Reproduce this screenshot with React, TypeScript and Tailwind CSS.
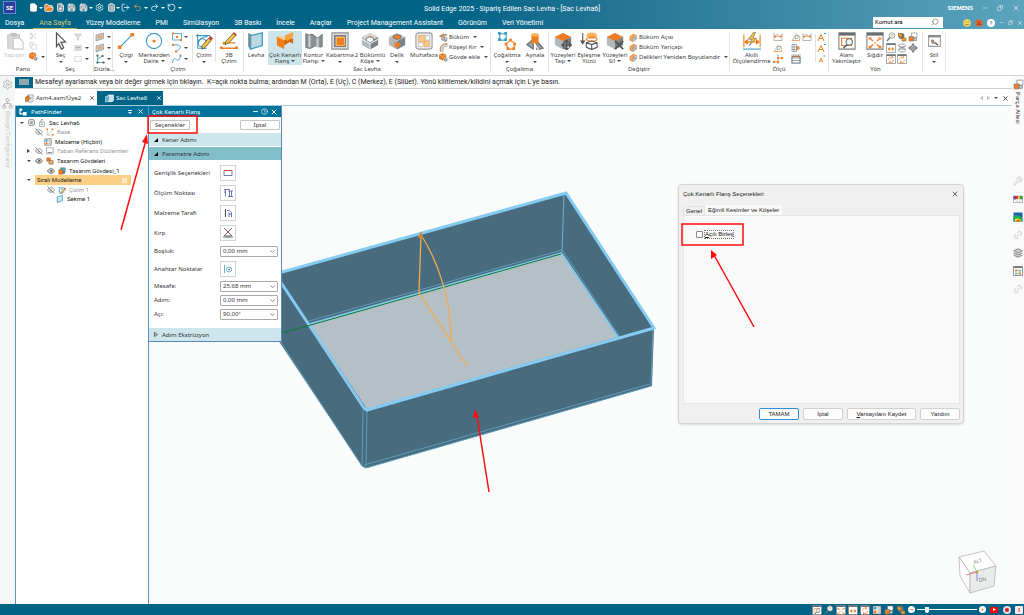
import type { ReactNode } from "react";
import {
  Eye,
  EyeOff,
  File,
  FilePlus,
  FolderOpen,
  Link2,
  Layers,
  Minus,
  Redo2,
  RotateCcw,
  Save,
  Scissors,
  Search,
  Settings,
  Undo2,
  Wrench,
  X,
  Copy,
  Filter,
  ClipboardList,
  LogOut,
  CircleHelp,
  Network,
} from "lucide-react";

const menuTabs = [
  "Dosya",
  "Ana Sayfa",
  "Yüzey Modelleme",
  "PMI",
  "Simülasyon",
  "3B Baskı",
  "İncele",
  "Araçlar",
  "Project Management Assistant",
  "Görünüm",
  "Veri Yönetimi",
];

const treeRows = [
  { label: "Sac Levha6", indent: "pl-1", caret: "open", icon: "root", eye: "", dim: false },
  { label: "Base", indent: "pl-[11px]", caret: "", icon: "axes", eye: "off", dim: true },
  { label: "Malzeme (Hiçbiri)", indent: "pl-[20px]", caret: "", icon: "material", eye: "", dim: false },
  { label: "Taban Referans Düzlemleri", indent: "pl-[11px]", caret: "closed", icon: "plane", eye: "off", dim: true },
  { label: "Tasarım Gövdeleri", indent: "pl-[11px]", caret: "open", icon: "bodies", eye: "on", dim: false },
  { label: "Tasarım Gövdesi_1", indent: "pl-[23px]", caret: "", icon: "body", eye: "on", dim: false },
  { label: "Sıralı Modelleme", indent: "pl-[11px]", caret: "open", icon: "", eye: "", dim: false },
  { label: "Çizim 1", indent: "pl-[23px]", caret: "", icon: "sketch", eye: "off", dim: true },
  { label: "Sekme 1", indent: "pl-[32px]", caret: "", icon: "tab", eye: "", dim: false },
];

const ORANGE = "#ef7d22";
const GRAY = "#6b7276";
const BLUE = "#3a9bc4";

function Icon({ name, className = "size-5" }: { name: string; className?: string }) {
  return (
    <svg className={`${className} shrink-0`} viewBox="0 0 20 20" fill="none" stroke={GRAY} strokeWidth="1.2">
      {drawings[name]}
    </svg>
  );
}

const isoBox = (top: string) => (
  <>
    <path d="M10 1l9 4.500v9L10 19.500l-9-5v-9z" fill="#b4b8ba" stroke="none" />
    <path d="M10 10l9-4.500v9l-9 5z" fill="#7d8487" stroke="none" />
    <path d="M10 1l9 4.500-9 4.500-9-4.500z" fill={top} stroke="none" />
  </>
);

const drawings: Record<string, ReactNode> = {
  paste: (
    <>
      <path d="M2 3h13v15H2z" fill="#d9dadb" stroke="#c6c8c9" />
      <path d="M5 1h7v4H5z" fill="#bfc1c2" stroke="none" />
      <path d="M8 7h7l4 4v8H8z" fill="#fff" stroke="#c6c8c9" />
    </>
  ),
  cursor: <path d="M5 1l10 10-5 .5 3 6-2.500 1.500-3-6L5 16z" fill="#fff" stroke="#555" strokeWidth="1.400" />,
  line: (
    <>
      <path d="M3 17L17 3" stroke={BLUE} />
      <path d="M1 15h4v4H1zM15 1h4v4h-4z" fill={ORANGE} stroke="none" />
    </>
  ),
  circle: (
    <>
      <circle cx="10" cy="10" r="8.500" stroke={BLUE} />
      <circle cx="10" cy="10" r="1.800" fill={ORANGE} stroke="none" />
    </>
  ),
  sketch: (
    <>
      <path d="M3 2v16h10M1 4h16M3 15C3 9 8 5 14 5" stroke={BLUE} />
      <circle cx="8" cy="12" r="4.500" stroke={BLUE} />
      <path d="M8 15l7-8 3 2.500-7 8-3.500 1.500z" fill="#f6c13d" stroke="#444" strokeWidth=".8" />
      <path d="M15 7l2-2.500 3 2.500-2 2.500z" fill="#c03c30" stroke="none" />
    </>
  ),
  sketch3d: (
    <>
      <path d="M1 18h18M4 12h13" stroke={ORANGE} strokeWidth="1.500" />
      <path d="M0 16h3v3H0zM17 16h3v3h-3zM3 11h3v3H3z" fill={ORANGE} stroke="none" />
      <path d="M6 11l9-10 3 2.500-8.500 9L6 14z" fill="#f6c13d" stroke="#444" strokeWidth=".8" />
      <path d="M15 1l3 2.500" stroke="#c03c30" strokeWidth="2" />
    </>
  ),
  plate: (
    <>
      <path d="M4 3l-2-1v14l2 3z" fill="#8b9296" stroke="#7a8285" />
      <path d="M4 4l13-3v14L4 19z" fill="#bcd9e1" stroke={BLUE} strokeWidth="1.400" />
    </>
  ),
  flange: (
    <>
      <path d="M1 5l8 4v10l-8-4z" fill="#f07f1a" stroke="none" />
      <path d="M1 5l3-1 8 4-3 1.500z" fill="#ffc98a" stroke="none" />
      <path d="M9 9l3-1 7-1v6l-4-2-6 4z" fill="#d9660a" stroke="none" />
      <path d="M10 4l9-4v5l-6 5-3-2z" fill="#f9a13a" stroke="none" />
    </>
  ),
  contour: (
    <>
      <path d="M1 2c5 4 5-2 9 2s6 2 9-1v13c-4 3-5-3-9 0s-5 2-9 1z" fill="#8a9296" stroke="#6e7679" />
      <path d="M5 4v13M14 6v11" stroke="#c6cbcd" strokeWidth="2.500" />
    </>
  ),
  emboss: (
    <>
      <path d="M1 1h18v18H1z" fill="#dedfe0" stroke="#8a9093" />
      <path d="M4 4h12v12H4z" fill="#9ba0a3" stroke="#777" />
      <path d="M6 6h9v9H6z" fill={ORANGE} stroke="#ffb45c" />
    </>
  ),
  corner: (
    <>
      {isoBox("#d6d9da")}
      <path d="M6 7l4-2 4 2v3l-4 2-4-2z" fill="#fff" stroke="#888" />
      <path d="M9 5l1-1 2 1-1 1.500z" fill={ORANGE} stroke="none" />
      <path d="M1 8l9 5 9-5M10 13v6.500" stroke="#eee" />
    </>
  ),
  hole: (
    <>
      {isoBox("#d0d3d4")}
      <ellipse cx="10" cy="5.500" rx="4.500" ry="2.500" fill={ORANGE} stroke="#777" />
      <path d="M7 11l3 1.500 3-1.500v5l-3 1.500L7 16z" fill={ORANGE} stroke="none" />
    </>
  ),
  housing: (
    <>
      <rect x="1" y="1" width="18" height="18" rx="3" fill="#e9eaeb" stroke="#989da0" />
      <path d="M4 4h7v7H4zM10 10h6v6h-6z" fill="#f9c88a" stroke="#f3a65c" strokeWidth=".8" />
      <path d="M12 4h4v5h-4zM4 12h5v4H4z" fill="#fff" stroke="#b8bbbc" strokeWidth=".8" />
    </>
  ),
  pattern: (
    <>
      <path d="M2 2h7v7H2z" stroke={BLUE} strokeWidth="1.200" />
      <path d="M0 0h3v3H0zM7 0h3v3H7zM0 7h3v3H0zM7 7h3v3H7z" fill={BLUE} stroke="none" />
      <path d="M14 9l5 4-2 6h-6l-2-6z" stroke={ORANGE} strokeWidth="1.200" />
      <path d="M12.500 7.500h3v3h-3zM7.500 12h3v3h-3zM9.500 17h3v3h-3zM16 17h3v3h-3zM17 12h3v3h-3z" fill={ORANGE} stroke="none" />
    </>
  ),
  mirror: (
    <>
      <path d="M1 14l7-6v11zM19 18l-7-8v10z" fill="#9ba1a4" stroke="#5f6669" />
      <path d="M6 3v8c0 3 8 3 8 0V3z" fill={ORANGE} stroke="none" />
      <ellipse cx="10" cy="3" rx="4" ry="2" fill="#ffb35a" stroke="none" />
      <path d="M9 12l5 8" stroke="#fff" />
    </>
  ),
  moveface: (
    <>
      {isoBox(ORANGE)}
      <path d="M14 9v11M9 14.500h10M14 9l-2 2h4zM14 20l-2-2h4zM8.500 14.500l2-2v4zM19.500 14.500l-2-2v4z" fill="#555" stroke="#555" />
    </>
  ),
  matchface: (
    <>
      <ellipse cx="13" cy="4" rx="6" ry="3.500" fill="#ffb162" stroke="none" />
      <ellipse cx="13" cy="8" rx="6" ry="2" stroke={ORANGE} />
      <path d="M7 12l6-2 6 2v5l-6 2.500L7 17zM7 12l6 2 6-2M13 14v5" fill="#fff" stroke="#555" />
      <path d="M3 1v10M1 10l2 3 2-3z" fill="#555" stroke="#555" />
    </>
  ),
  deleteface: (
    <>
      {isoBox(ORANGE)}
      <path d="M10 10l9 9M19 10l-9 9" stroke="#555" strokeWidth="2" />
    </>
  ),
  smartdim: (
    <>
      <path d="M1 3v14M19 3v14" stroke={ORANGE} />
      <path d="M2 11h16M2 11l3-2v4zM18 11l-3-2v4z" fill={ORANGE} stroke={ORANGE} />
      <path d="M12 0L6 8h4l-3 7 8-8h-4l3-7z" fill="#f6c32c" stroke="#777" strokeWidth=".8" />
      <path d="M0 19h20" stroke={BLUE} />
    </>
  ),
  zoomarea: (
    <>
      <path d="M1 1h18v18H1z" fill="#fff" stroke="#7b8083" />
      <path d="M1 1h18v3H1z" fill="#696e71" stroke="none" />
      <path d="M4 7h11v8H4z" stroke={ORANGE} />
      <circle cx="12.500" cy="11" r="3.500" fill="#eef4f6" />
      <path d="M10 14l-4 4" strokeWidth="2" />
    </>
  ),
  fit: (
    <>
      <path d="M1 1h18v18H1z" fill="#fff" stroke="#7b8083" />
      <path d="M1 1h18v3H1z" fill="#696e71" stroke="none" />
      <path d="M4 7l4 3M16 7l-4 3M4 17l4-3M16 17l-4-3" stroke={ORANGE} strokeWidth="1.500" />
      <path d="M3 6h4l-4 3zM17 6h-4l4 3zM3 18h4l-4-3zM17 18h-4l4-3z" fill={ORANGE} stroke="none" />
      <circle cx="10" cy="12" r="1" fill={ORANGE} stroke="none" />
    </>
  ),
  style: (
    <>
      <path d="M4 4h13v12H4z" fill="#fff" stroke="#9aa0a2" />
      <path d="M3.500 3.500h14v2.500h-14z" fill="#888" stroke="none" />
      <path d="M7 9h2.500l1 3.500H8z" fill="#e69a5d" stroke="#666" strokeWidth=".8" />
      <path d="M11 12l3.500 2.500" stroke="#444" />
    </>
  ),
  frame: (
    <>
      <path d="M1 1h18v18H1z" fill="#fff" stroke="#6f7477" />
      <path d="M1 1h18v3H1z" fill="#6f7477" stroke="none" />
      <path d="M4 12h12M4 12l3-3v6zM16 12l-3-3v6z" stroke={ORANGE} fill={ORANGE} />
    </>
  ),
  orbit: (
    <>
      <path d="M1 1h18v18H1z" fill="#fff" stroke="#6f7477" />
      <path d="M1 1h18v3H1z" fill="#6f7477" stroke="none" />
      <path d="M5 11a5 5 0 018-4M15 12a5 5 0 01-8 4M12 4l2 3-3 2M8 19l-2-3 3-2" stroke={ORANGE} strokeWidth="1.500" />
    </>
  ),
  rect: (
    <>
      <path d="M1 3h18v13H1z" stroke={BLUE} strokeWidth="1.600" />
      <path d="M8 8h4v4H8zM0 1h4v4H0zM16 14h4v4h-4z" fill={ORANGE} stroke="none" />
    </>
  ),
  arc: (
    <>
      <path d="M3 4c14-3 20 6 5 13" stroke={BLUE} strokeWidth="1.800" />
      <path d="M0 2h4v4H0zM6 15h4v4H6z" fill={ORANGE} stroke="none" />
    </>
  ),
  spline: (
    <>
      <path d="M1 18C2 8 6 8 9 11s6 2 8-8" stroke={BLUE} strokeWidth="1.800" />
      <path d="M15 1h4v4h-4z" fill="#8b989d" stroke="none" />
    </>
  ),
  planeA: (
    <>
      <path d="M2 6l15-4v11L2 18z" fill="#c6cacc" stroke="#80878a" />
      <path d="M6 8l8-2v5l-8 2z" fill="#f6a45a" stroke="none" />
    </>
  ),
  coord: (
    <>
      <path d="M5 2v15h14M5 11l10-7" stroke={BLUE} strokeWidth="1.600" />
      <path d="M3 1h4v4H3zM13 2h4v4h-4zM3 15h4v4H3zM15 15h4v4h-4z" fill="#5c6468" stroke="none" />
    </>
  ),
  steps: (
    <>
      <path d="M2 16h8V8h9" stroke={ORANGE} strokeWidth="1.600" />
      <path d="M0 14h4v4H0zM8 6h4v4H8zM16 6h4v4h-4zM8 14h4v4H8z" fill={ORANGE} stroke="none" />
      <path d="M10 1v5M10 18v2" stroke={BLUE} strokeWidth="1.600" />
    </>
  ),
  bend: (
    <>
      <path d="M1 7l8-5 9 2-6 4v6l6 3-4 2-8-4V9z" fill="#b3b8ba" stroke="#696f72" />
      <path d="M2 7l7-4 4 1-7 5z" fill={ORANGE} stroke="none" />
      <circle cx="15" cy="13" r="3" fill="#ddd" />
    </>
  ),
  breakcorner: (
    <>
      <path d="M3 19V11C4 5 9 2 18 1v6c-6 0-8 3-9 12z" fill="#d5d8d9" stroke="#8f9497" />
      <path d="M3 19V11C4 5 9 2 18 1" stroke={ORANGE} strokeWidth="1.800" />
    </>
  ),
  bendangle: (
    <>
      <path d="M2 8l8-6 5 3-7 5v9l-6-3z" fill="#f3a45c" stroke={ORANGE} />
      <path d="M9 10l8-5v8l-8 6z" fill="#eceeef" stroke="#777" />
      <circle cx="13" cy="12" r="2" stroke="#555" />
    </>
  ),
  addbody: (
    <>
      <path d="M8 1l7 3v8l-7 4-7-4V4z" fill={ORANGE} stroke="#b95606" />
      <path d="M1 4l7 4 7-4" stroke="#ffcf9d" />
      <circle cx="15" cy="15" r="4.500" fill="#777" stroke="#fff" />
      <path d="M13 15h4M15 13v4" stroke="#fff" />
    </>
  ),
  dimension: (
    <>
      <path d="M2 2v15h16V2M5 9l4-5 4 5" stroke="#888" />
      <path d="M2 9h16M2 9l3-2v4zM18 9l-3-2v4z" fill={ORANGE} stroke={ORANGE} />
    </>
  ),
  angle: (
    <>
      <path d="M2 17L11 3M2 17h16M14 5c3 3 4 7 3 11" stroke={ORANGE} strokeWidth="1.300" />
      <path d="M9 7h6l-2 6H8z" stroke={BLUE} />
    </>
  ),
  calendar: (
    <>
      <path d="M0 0h20v20H0z" fill="#c8dfea" stroke="none" />
      <path d="M2 5h16v13H2z" fill="#fff" stroke="#596166" strokeWidth="1.600" />
      <path d="M2 8h16M2 13h16" stroke="#596166" />
      <path d="M5 2v5M10 2v5M15 2v5" stroke={ORANGE} strokeWidth="2" />
    </>
  ),
  table: (
    <>
      <path d="M2 3h9v14H2zM2 8h9M2 13h9M6 3v14M14 8l4 2-4 3" />
      <path d="M12 6h3v8h-3z" fill={ORANGE} stroke="none" />
    </>
  ),
  textA: (
    <>
      <path d="M4 18L10 5l6 13M6 13h8" stroke={ORANGE} strokeWidth="2" />
      <path d="M16 3h4" stroke={BLUE} strokeWidth="2" />
    </>
  ),
  textSmall: (
    <>
      <path d="M6 17l4-9 4 9M7 14h6" stroke={ORANGE} strokeWidth="1.600" />
      <path d="M15 4h4" stroke={BLUE} strokeWidth="2" />
    </>
  ),
  globe: (
    <>
      <circle cx="9" cy="8" r="6" fill="#777" stroke="none" />
      <path d="M3 2l7 3v6l-7-2zM10 12h8v6h-8z" fill="#f2a43c" stroke="#8f5a1a" />
    </>
  ),
  spin: (
    <>
      <ellipse cx="10" cy="5" rx="7" ry="3" />
      <path d="M3 5c0 5 14 4 14 9M17 5c0 5-14 4-14 9" />
      <ellipse cx="10" cy="15" rx="7" ry="3" />
    </>
  ),
  pan: (
    <>
      <path d="M10 0l3 4h-6zM10 20l3-4h-6zM0 10l4-3v6zM20 10l-4-3v6z" fill="#777" stroke="none" />
      <path d="M10 4l6 3v6l-6 3-6-3V7z" fill="#9ea4a6" />
    </>
  ),
  magnify: (
    <>
      <circle cx="12" cy="7" r="5.500" fill="#f4f6f7" />
      <path d="M8 11l-6 7" strokeWidth="2.500" />
      <path d="M12 4v4M12 9.500v1" stroke={ORANGE} strokeWidth="1.500" />
    </>
  ),
  blocks: (
    <>
      <path d="M7 2h11v9H7z" fill="#fff" stroke="#777" />
      <path d="M2 9h9v9H2z" fill={ORANGE} stroke="#777" />
      <path d="M12 12h5v5h-5z" fill="#d7d9da" />
    </>
  ),
  doc: (
    <>
      <path d="M6 2h12v13l-3 3H6z" fill="#eef3f5" stroke="#5d7078" />
      <path d="M1 7l8-3v10l-8 3z" fill={ORANGE} stroke="#8a4a10" />
      <path d="M9 8h6M9 11h6" />
    </>
  ),
  tabdoc: (
    <>
      <path d="M7 2h12v12l-3 3H7z" fill="#cfe3ea" stroke="#fff" />
      <path d="M1 6l9-2v11l-9 3z" fill="#5db2cf" stroke="#e9f4f8" />
    </>
  ),
  pathfinder: <path d="M1 1h7v6H4v6h6v-3h9v9h-9v-3H1z" fill="#fff" stroke="none" />,
  root: (
    <>
      <path d="M4 8h12v11H4z" fill="#fff" stroke="#555" />
      <path d="M7 8V4a3 3 0 016 0" stroke="#777" strokeWidth="1.500" />
      <path d="M8 12h4v3H8z" fill={BLUE} stroke="none" />
    </>
  ),
  part: (
    <>
      <rect x="2" y="2" width="16" height="16" rx="3" fill="#fff" stroke="#555" strokeWidth="2" />
      <path d="M6 7h8M6 13h8M6 10h8" stroke="#555" strokeWidth="1.600" />
    </>
  ),
  axes: (
    <>
      <path d="M3 2v16h15M3 18L17 3" stroke={GRAY} strokeDasharray="2 1" />
      <path d="M1 1h4v4H1zM14 1h4v4h-4zM15 15h4v4h-4z" fill={ORANGE} stroke="none" />
    </>
  ),
  material: (
    <>
      <path d="M2 2h16v16H2z" fill="#fff" stroke="#555" strokeWidth="1.500" />
      <path d="M4 4h5v5H4z" fill={BLUE} stroke="none" />
      <path d="M4 11h5v5H4z" fill={ORANGE} stroke="none" />
      <path d="M11 6h5M11 10h5M11 14h5" stroke="#555" />
    </>
  ),
  plane: (
    <>
      <path d="M1 2h17v15H1z" fill="#fff" stroke="#777" strokeWidth="1.400" />
      <path d="M4 13h11v2H4z" fill="#777" stroke="none" />
    </>
  ),
  bodies: (
    <>
      <path d="M2 2h9v8H2z" fill={ORANGE} stroke="#b15c12" />
      <path d="M8 9h10v9H8z" fill="#f8ad55" stroke="#555" />
      <path d="M3 11l5 5" stroke="#333" />
    </>
  ),
  body: (
    <>
      <path d="M6 2h12v11H6z" fill="#4fa6c4" stroke="#34788f" />
      <path d="M2 7h10v11H2z" fill={ORANGE} stroke="#a8560f" />
      <path d="M12 12h5v5h-5z" fill="#666" stroke="none" />
    </>
  ),
  tab: <path d="M3 5l13-4v13L3 19z" fill="#cfe9f1" stroke={BLUE} strokeWidth="2" />,
  eyelines: (
    <>
      <path d="M2 4h16v12H2z" fill="#ddd" stroke="#bbb" />
      <path d="M5 9h10" />
    </>
  ),
  selectbox: <path d="M2 4h16v12H2z" fill="#fff" stroke="#b5b5b5" />,
  palette: (
    <>
      <path d="M1 4h18v13H1z" fill="#fff" stroke="#888" />
      <path d="M1 4h5v7H1z" fill="#7a3fa0" stroke="none" />
      <path d="M6 4h4v7H6z" fill="#e2382d" stroke="none" />
      <path d="M10 4h4v7h-4z" fill="#f5c02d" stroke="none" />
      <path d="M14 4h5v7h-5z" fill="#2f9e59" stroke="none" />
      <path d="M5 12l4-3 4 3 4-2v6H5z" fill="#e7eef1" stroke="none" />
    </>
  ),
  rainbow: (
    <>
      <path d="M1 1h18v18H1z" fill="#1f62b5" stroke="none" />
      <path d="M1 19V9a11 11 0 0118 8v2z" fill="#22b04c" stroke="none" />
      <path d="M4 19v-5a9 9 0 0113 5z" fill="#f7d633" stroke="none" />
      <path d="M7 19v-2a5 5 0 018 2z" fill="#e44326" stroke="none" />
    </>
  ),
  swatches: (
    <>
      <path d="M1 1h18v18H1z" fill="#fff" stroke="#777" strokeWidth="1.600" />
      <path d="M1 1h18v3H1z" fill="#777" stroke="none" />
      <path d="M4 7h5v4H4zM11 13h5v4h-5z" fill={ORANGE} stroke="none" />
      <path d="M11 7h5v4h-5zM4 13h5v4H4z" fill="#76b8d0" stroke="none" />
    </>
  ),
  smile: (
    <>
      <circle cx="10" cy="10" r="9.500" fill="#f6dc62" stroke="none" />
      <path d="M5 12c2 4 8 4 10 0M7 6v3M13 6v3" stroke="#6a5a10" strokeWidth="1.800" />
    </>
  ),
  frown: (
    <>
      <circle cx="10" cy="10" r="9.500" fill="#d8683a" stroke="none" />
      <path d="M5 15c2-4 8-4 10 0M6 6l3 2M14 6l-3 2" stroke="#5d1a00" strokeWidth="1.800" />
    </>
  ),
};

function Caret({ className = "text-[#444]" }: { className?: string }) {
  return (
    <svg className={`h-[2px] w-1 shrink-0 ${className}`} viewBox="0 0 4 2" fill="currentColor">
      <path d="M0 0h4L2 2z" />
    </svg>
  );
}

type BigButtonProps = {
  icon: string;
  lines: string[];
  width: string;
  caret?: boolean;
  active?: boolean;
  disabled?: boolean;
};

function BigButton({ icon, lines, width, caret, active, disabled }: BigButtonProps) {
  return (
    <button
      disabled={disabled}
      className={`${width} ${active ? "bg-[#cde5ea]" : ""} ${
        disabled ? "text-[#c4c4c4]" : "text-[#3c3c3c]"
      } flex h-[34px] shrink-0 flex-col items-center pt-px leading-[6px] whitespace-nowrap`}
    >
      <Icon name={icon} className="mb-[2px] size-[18px]" />
      <span>{lines[0]}</span>
      {lines.length > 1 ? (
        <span className="flex items-center gap-[2px]">
          {lines[1]}
          {caret && <Caret />}
        </span>
      ) : (
        caret && <Caret className="mt-[3px] text-[#444]" />
      )}
    </button>
  );
}

function Group({ label, width, children }: { label: string; width: string; children: ReactNode }) {
  return (
    <section className={`${width} flex shrink-0 flex-col pt-[2px]`}>
      <div className="flex h-[34px]">{children}</div>
      <h2 className="text-center leading-[8px]">{label}</h2>
    </section>
  );
}

function Rule() {
  return <div className="my-[3px] w-px shrink-0 bg-[#e2e2e2]" />;
}

function SmallIcons({ names, cols, carets }: { names: string[]; cols: string; carets?: boolean }) {
  return (
    <div className={`grid ${cols} content-start gap-x-px`}>
      {names.map((name, index) =>
        name ? (
          <button key={index} className="flex h-[11px] items-center gap-[2px]">
            <Icon name={name} className="size-[10px]" />
            {carets && <Caret />}
          </button>
        ) : (
          <span key={index} />
        ),
      )}
    </div>
  );
}

function TextCommands({ items }: { items: { icon: string; label: string; caret?: boolean }[] }) {
  return (
    <div className="flex flex-col pt-px">
      {items.map((item) => (
        <button key={item.label} className="flex h-[10px] items-center gap-px whitespace-nowrap">
          <Icon name={item.icon} className="size-[9px]" />
          {item.label}
          {item.caret && (
            <span className="pl-[3px]">
              <Caret />
            </span>
          )}
        </button>
      ))}
    </div>
  );
}

function TitleBar() {
  return (
    <header className="bg-linear-to-r from-[#006487] from-45% to-[#5aa4bd] font-['Roboto',sans-serif] text-[7px] text-white">
      <div className="relative flex h-[15px] items-center">
        <div className="ml-[3px] flex size-[13px] items-center justify-center border border-[#6f86d6] bg-[#27409e] text-[6px] font-bold">
          SE
        </div>
        <div className="ml-[13px] flex items-center">
          <File className="size-[9px] fill-white" />
          <Caret className="ml-px text-white" />
          <FolderOpen className="ml-px size-[10px] fill-[#ef7d22]" />
          <FilePlus className="ml-[2px] size-[9px] fill-[#8a9ba3]" />
          <Save className="ml-[2px] size-[9px] fill-[#8a9ba3]" />
          <Save className="ml-[3px] size-[9px] fill-[#8a9ba3]" />
          <Caret className="ml-px text-white" />
          <Settings className="ml-[2px] size-[9px]" />
          <ClipboardList className="ml-[3px] size-[9px] fill-[#8a9ba3]" />
          <Caret className="text-white" />
          <LogOut className="ml-px size-[9px]" />
          <Undo2 className="ml-[3px] size-[9px] text-[#d99a55]" />
          <Caret className="ml-[2px] text-white" />
          <Redo2 className="ml-[2px] size-[9px]" />
          <Caret className="ml-[2px] text-white" />
          <RotateCcw className="ml-[2px] size-[9px]" />
          <Caret className="ml-[2px] text-white" />
        </div>
        <h1 className="absolute inset-x-0 top-[5px] text-center leading-[9px]">
          Solid Edge 2025 - Sipariş Edilen Sac Levha - [Sac Levha6]
        </h1>
        <div className="relative ml-auto flex items-center gap-[9px] pr-1">
          <span className="text-[6px] font-bold">SIEMENS</span>
          <button aria-label="Simge durumuna küçült">
            <Minus className="size-[6px]" />
          </button>
          <button aria-label="Geri yükle">
            <Copy className="size-[6px] -scale-x-100" />
          </button>
          <button aria-label="Kapat">
            <X className="size-[8px]" />
          </button>
        </div>
      </div>
      <div className="flex h-[14px] items-stretch pl-[5px]">
        <nav className="flex gap-[15px]">
          {menuTabs.map((tab) => (
            <button
              key={tab}
              className={
                tab === "Ana Sayfa"
                  ? "-mx-[6px] border-b border-[#b5b368] px-[6px] pt-[3px] text-[#dccb74]"
                  : "border-b border-transparent pt-[3px]"
              }
            >
              {tab}
            </button>
          ))}
        </nav>
        <div className="ml-auto flex items-center">
          <label className="flex h-[11px] w-[70px] items-center bg-white pr-1">
            <input
              aria-label="Komut ara"
              placeholder="Komut ara"
              className="w-full min-w-0 pl-[2px] text-[6px] text-black outline-none placeholder:text-black"
            />
            <Search className="size-2 shrink-0 -scale-x-100 text-[#777]" />
          </label>
          <div className="ml-5 flex items-center gap-1 pt-px pr-px">
            <Icon name="smile" className="size-2" />
            <Icon name="frown" className="size-2" />
            <span className="flex size-2 items-center justify-center rounded-full bg-white text-[6px] text-[#006487]">?</span>
            <Minus className="size-[5px]" />
            <Copy className="size-[5px] -scale-x-100" />
            <X className="size-[6px]" />
          </div>
        </div>
      </div>
    </header>
  );
}

function Ribbon() {
  return (
    <div className="flex h-[46px] overflow-hidden bg-white text-[#3c3c3c]">
      <Group label="Pano" width="w-[46px]">
        <BigButton icon="paste" lines={["Yapıştır"]} width="w-[29px]" disabled />
        <div className="flex flex-col gap-[2px] pt-px text-[#c4c4c4]">
          <Scissors className="size-[8px]" />
          <Copy className="size-[8px]" />
          <span className="flex items-center gap-[3px]">
            <Icon name="addbody" className="size-[9px]" />
            <Caret />
          </span>
        </div>
      </Group>
      <Rule />
      <Group label="Seç" width="w-[46px]">
        <BigButton icon="cursor" lines={["Seç"]} width="w-[27px]" caret />
        <div className="flex flex-col gap-[3px] pt-[2px] text-[#c4c4c4]">
          <Filter className="size-[8px] fill-[#ddd]" />
          <span className="flex items-center gap-[3px]">
            <Icon name="eyelines" className="size-[8px]" />
            <Caret />
          </span>
          <span className="flex items-center gap-[3px]">
            <Icon name="selectbox" className="size-[8px]" />
            <Caret />
          </span>
        </div>
      </Group>
      <Rule />
      <Group label="Düzle..." width="w-[18px]">
        <div className="pl-px">
          <SmallIcons names={["planeA", "planeA", "coord"]} cols="grid-cols-1" carets />
        </div>
      </Group>
      <Rule />
      <Group label="Çizim" width="w-[130px]">
        <BigButton icon="line" lines={["Çizgi"]} width="w-[26px]" caret />
        <BigButton icon="circle" lines={["Merkezden", "Daire"]} width="w-[30px]" caret />
        <div className="w-[23px] shrink-0 pl-[3px]">
          <SmallIcons names={["rect", "arc", "spline"]} cols="grid-cols-1" carets />
        </div>
        <Rule />
        <BigButton icon="sketch" lines={["Çizim"]} width="w-[22px]" caret />
        <Rule />
        <BigButton icon="sketch3d" lines={["3B", "Çizim"]} width="w-[26px]" />
      </Group>
      <Rule />
      <Group label="Sac Levha" width="w-[246px]">
        <BigButton icon="plate" lines={["Levha"]} width="w-[24px]" />
        <BigButton icon="flange" lines={["Çok Kenarlı", "Flanş"]} width="w-[34px]" caret active />
        <BigButton icon="contour" lines={["Kontur", "Flanşı"]} width="w-[23px]" caret />
        <BigButton icon="emboss" lines={["Kabartma"]} width="w-[30px]" caret />
        <BigButton icon="corner" lines={["2 Bükümlü", "Köşe"]} width="w-[30px]" caret />
        <BigButton icon="hole" lines={["Delik"]} width="w-[24px]" caret />
        <BigButton icon="housing" lines={["Muhafaza"]} width="w-[30px]" />
        <TextCommands
          items={[
            { icon: "bend", label: "Büküm", caret: true },
            { icon: "breakcorner", label: "Köşeyi Kır", caret: true },
            { icon: "addbody", label: "Gövde ekle", caret: true },
          ]}
        />
      </Group>
      <Rule />
      <Group label="Çoğaltma" width="w-[57px]">
        <BigButton icon="pattern" lines={["Çoğaltma"]} width="w-[32px]" caret />
        <BigButton icon="mirror" lines={["Aynala"]} width="w-[24px]" caret />
      </Group>
      <Rule />
      <Group label="Değiştir" width="w-[180px]">
        <BigButton icon="moveface" lines={["Yüzeyleri", "Taşı"]} width="w-[28px]" caret />
        <BigButton icon="matchface" lines={["Eşleşme", "Yüzü"]} width="w-[24px]" />
        <BigButton icon="deleteface" lines={["Yüzeyleri", "Sil"]} width="w-[28px]" caret />
        <TextCommands
          items={[
            { icon: "bendangle", label: "Büküm Açısı" },
            { icon: "bendangle", label: "Büküm Yarıçapı" },
            { icon: "bendangle", label: "Delikleri Yeniden Boyutlandır", caret: true },
          ]}
        />
      </Group>
      <Rule />
      <Group label="Ölçü" width="w-[98px]">
        <BigButton icon="smartdim" lines={["Akıllı", "Ölçülendirme"]} width="w-[43px]" />
        <div className="w-[42px] shrink-0">
          <SmallIcons
            names={["dimension", "angle", "dimension", "angle", "table", "", "steps", "calendar"]}
            cols="grid-cols-[17px_10px_10px]"
          />
        </div>
        <Rule />
        <SmallIcons names={["textA", "textA", "textSmall"]} cols="grid-cols-1" />
      </Group>
      <Rule />
      <Group label="Yön" width="w-[93px]">
        <BigButton icon="zoomarea" lines={["Alanı", "Yakınlaştır"]} width="w-[35px]" />
        <BigButton icon="fit" lines={["Sığdır"]} width="w-[22px]" />
        <SmallIcons
          names={["magnify", "globe", "blocks", "frame", "spin", "pan", "orbit", "orbit"]}
          cols="grid-cols-3"
        />
      </Group>
      <Rule />
      <Group label="" width="w-[22px]">
        <BigButton icon="style" lines={["Stil"]} width="w-[22px]" caret />
      </Group>
      <Rule />
    </div>
  );
}

function TreeIcon({ eye }: { eye: string }) {
  if (eye === "on") return <Eye className="size-[8px] shrink-0" />;
  if (eye === "off") return <EyeOff className="size-[8px] shrink-0 text-[#666]" />;
  return null;
}

function PathFinder() {
  return (
    <aside className="flex w-[134px] shrink-0 flex-col border-x border-[#5d94c4] bg-white">
      <div className="flex h-[11px] items-center bg-[#00739c] pr-1 pl-[3px] text-white">
        <Icon name="pathfinder" className="size-[8px]" />
        <h2 className="pl-1">PathFinder</h2>
        <span className="ml-auto border-t border-white pt-px">
          <Caret className="text-white" />
        </span>
        <button aria-label="PathFinder kapat" className="ml-[5px]">
          <X className="size-[7px] stroke-3" />
        </button>
      </div>
      <ul className="mt-px grid h-[86px] grid-rows-9 font-['Roboto',sans-serif] text-[#222]">
        {treeRows.map((row) => {
          const section = row.label === "Sıralı Modelleme";
          return (
            <li key={row.label} className={`flex items-center whitespace-nowrap ${row.indent} ${row.dim ? "text-[#9a9a9a]" : ""}`}>
              <span className="flex w-2 shrink-0 items-center">
                {row.caret === "open" && <Caret />}
                {row.caret === "closed" && (
                  <svg className="h-1 w-[3px] text-[#444]" viewBox="0 0 3 4" fill="currentColor">
                    <path d="M0 0l3 2-3 2z" />
                  </svg>
                )}
              </span>
              <span
                className={`flex items-center gap-[3px] ${section ? "mr-[17px] h-full flex-1 bg-[#fbd084] pl-[2px]" : ""}`}
              >
                <TreeIcon eye={row.eye} />
                {row.icon === "root" && <Icon name="part" className="size-[7px]" />}
                {row.icon && <Icon name={row.icon} className="size-[8px]" />}
                {row.label}
                {section && (
                  <span className="mr-1 ml-auto size-[5px] border border-[#f7edd8] bg-[#fbe3b5]" />
                )}
              </span>
            </li>
          );
        })}
      </ul>
    </aside>
  );
}

function Field({ id, label, value }: { id: string; label: string; value: string }) {
  return (
    <>
      <label htmlFor={id} className="w-[66px]">
        {label}
      </label>
      <div className="relative">
        <select
          id={id}
          className="h-[11px] w-[58px] appearance-none rounded-[1px] border border-[#a9a9a9] bg-white pl-[2px] leading-[8px]"
        >
          <option>{value}</option>
        </select>
        <svg className="pointer-events-none absolute top-1 right-[3px] h-[3px] w-[5px]" viewBox="0 0 5 3" fill="none" stroke="#888">
          <path d="M.5.500l2 2 2-2" />
        </svg>
      </div>
    </>
  );
}

function ToolField({ label, children }: { label: string; children: ReactNode }) {
  return (
    <>
      <span className="w-[66px]">{label}</span>
      <button aria-label={label} className="flex size-4 items-center justify-center border border-[#d2d2d2] bg-[#fdfdfd]">
        <svg className="size-[10px]" viewBox="0 0 10 10" fill="none" stroke="#4a58a8" strokeWidth=".8">
          {children}
        </svg>
      </button>
    </>
  );
}

function FlangePanel() {
  return (
    <section className="absolute top-0 left-0 flex w-[133px] flex-col border-r border-b border-[#5d86bd] bg-white text-[#333]">
      <div className="flex h-[11px] items-center gap-[2px] bg-[#00739c] pr-[3px] pl-[3px] text-white">
        <h2 className="mr-auto">Çok Kenarlı Flanş</h2>
        <Minus className="size-[7px] stroke-3" />
        <CircleHelp className="size-[7px]" />
        <X className="size-[8px] stroke-3" />
      </div>
      <div className="flex h-4 items-center justify-between pr-px pl-px">
        <button className="h-[10px] w-10 rounded-[1px] border border-[#c3c3c3] bg-[#fdfdfd] leading-[7px]">Seçenekler</button>
        <button className="h-[10px] w-10 rounded-[1px] border border-[#c3c3c3] bg-[#fdfdfd] leading-[7px]">İptal</button>
      </div>
      <h3 className="flex h-[13px] items-center gap-1 bg-[#cde6eb] pl-[5px]">
        <svg className="size-1" viewBox="0 0 4 4">
          <path d="M4 0v4H0z" />
        </svg>
        Kenar Adımı
      </h3>
      <h3 className="mt-px flex h-[13px] items-center gap-1 bg-[#82bdca] pl-[5px]">
        <svg className="size-1" viewBox="0 0 4 4">
          <path d="M4 0v4H0z" />
        </svg>
        Parametre Adımı
      </h3>
      <div className="flex flex-col pt-[3px] pb-[7px] pl-[5px]">
        <div className="flex h-5 items-center">
          <ToolField label="Genişlik Seçenekleri">
            <path d="M1 2.500h8v5H1z" />
            <path d="M1 2.500h8" stroke="#e5392f" />
          </ToolField>
        </div>
        <div className="flex h-5 items-center">
          <ToolField label="Ölçüm Noktası">
            <path d="M1 1.500h6M2.500 1.500v7M6.500 3v5.500M8.500 3v5.500M5 3h5M5 8.500h5M1 4h2" />
          </ToolField>
        </div>
        <div className="flex h-5 items-center">
          <ToolField label="Malzeme Tarafı">
            <path d="M4 2.500h2.500l2 2v4.500M6 4.500v4.500M6 6h2" />
            <path d="M2.500 1v8" stroke="#222" />
          </ToolField>
        </div>
        <div className="flex h-5 items-center">
          <ToolField label="Kırp">
            <path d="M1 0l8 8M9 0L1 8M0 9h10M2 8h6" stroke="#444" />
            <circle cx="5" cy="4" r="1" fill="#e5392f" stroke="none" />
          </ToolField>
        </div>
        <div className="flex h-4 items-center">
          <Field id="bosluk" label="Boşluk:" value="0.00 mm" />
        </div>
        <div className="flex h-5 items-center">
          <ToolField label="Anahtar Noktalar">
            <path d="M1.500 1v8" stroke="#3a9bc4" />
            <circle cx="6" cy="5.500" r="2.500" stroke="#3a9bc4" />
            <circle cx="6" cy="5.500" r=".8" fill="#e5392f" stroke="none" />
          </ToolField>
        </div>
        <div className="flex h-[14px] items-center">
          <Field id="mesafe" label="Mesafe:" value="25.68 mm" />
        </div>
        <div className="flex h-[14px] items-center">
          <Field id="adim" label="Adım:" value="0.00 mm" />
        </div>
        <div className="flex h-[14px] items-center">
          <Field id="aci" label="Açı:" value="90.00°" />
        </div>
      </div>
      <h3 className="flex h-[13px] items-center gap-1 bg-[#cde6eb] pl-[5px]">
        <svg className="h-[5px] w-1" viewBox="0 0 4 5" fill="none" stroke="#444" strokeWidth=".8">
          <path d="M.5.500l3 2-3 2z" />
        </svg>
        Adım Ekstrüzyon
      </h3>
    </section>
  );
}

// Sheet metal tray with the flange preview on top of it
function Model() {
  return (
    <svg className="absolute top-0 left-0 h-[400px] w-[520px]" viewBox="149 106 520 400" fill="none">
      <path d="M270 276L565 193l89 135-2 58-286 82-4-2-84-126-8-20z" fill="#486b7d" />
      <path d="M310 325l252-72 56 84-251 72z" fill="#b5c0c6" />
      <path d="M309 321l253-71" stroke="#5f9ab8" />
      <path d="M310 324l252-71" stroke="#86c9ee" strokeWidth="2" />
      <path d="M562 254l56 83" stroke="#86c9ee" strokeWidth="2" />
      <path d="M563 251l57 86" stroke="#5f9ab8" />
      <path d="M564 194l-2 58" stroke="#6fb2d3" />
      <path d="M278 338l84 128 4 2 285-82 2-56M363 410l-1 56M367 410l-1 58M364 465l286-81" stroke="#5f9db9" />
      <path d="M275 274L566 193l88 135-287 82-3-2-90-136" stroke="#86cbf2" strokeWidth="3" />
      <path d="M279 334l282-80" stroke="#0b7a32" />
      <path d="M421 235l-2 58 48 73M421 235c16 24 31 66 30 107" stroke="#f2a951" strokeWidth="1.300" />
      <path d="M421 231l-3 7h5z" fill="#d9822b" />
    </svg>
  );
}

function ViewCube() {
  return (
    <svg className="absolute right-[13px] bottom-[8px] h-[48px] w-[42px]" viewBox="956 547 42 48" fill="none" stroke="#b5b5b5" strokeWidth=".8">
      <path d="M958 556l25-6 12 15-26 7z" fill="#fff" />
      <path d="M958 556l11 16v20l-10-17z" fill="#fdfdfd" />
      <path d="M969 572l26-7-2 20-24 7z" fill="#e9ebeb" />
      <path d="M976 571l-4-7" stroke="#5fd75f" />
      <path d="M976 571l-11 3" stroke="#f06a6a" />
      <path d="M976 571v9" stroke="#6a6ae8" />
      <circle cx="976" cy="571" r="1.300" fill="#b9a520" stroke="none" />
      <text x="973" y="563" fontSize="5" fill="#888" stroke="none" transform="rotate(-14 973 563)">
        ALT
      </text>
      <text x="978" y="581" fontSize="5" fill="#777" stroke="none" transform="rotate(-10 978 581)">
        ÖN
      </text>
    </svg>
  );
}

function OptionsDialog() {
  return (
    <div
      role="dialog"
      aria-label="Çok Kenarlı Flanş Seçenekleri"
      className="absolute top-[78px] left-[529px] flex h-[240px] w-[286px] flex-col rounded-[4px] border border-[#d3d5d5] bg-[#f0f0f0] pr-[3px] pb-[3px] pl-1 font-['Liberation_Sans',sans-serif] text-[#222] shadow-sm"
    >
      <div className="flex h-[17px] shrink-0 items-center justify-between">
        <h2>Çok Kenarlı Flanş Seçenekleri</h2>
        <button aria-label="Kapat" className="pr-px">
          <X className="size-2" />
        </button>
      </div>
      <div className="mt-[3px] flex h-[10px] shrink-0 items-end" role="tablist">
        <button role="tab" className="h-[9px] border border-b-0 border-[#e5e5e5] px-[2px]">
          Genel
        </button>
        <button role="tab" aria-selected="true" className="h-[10px] bg-[#f9f9f9] px-[3px]">
          Eğimli Kesimler ve Köşeler
        </button>
      </div>
      <div className="flex-1 border border-[#e6e6e6] bg-[#f9f9f9] pt-[14px] pl-3">
        <label className="flex items-center gap-px">
          <input type="checkbox" className="size-[7px] appearance-none rounded-[1px] border border-[#888] bg-[#fdfdfd]" />
          <span className="border border-dotted border-[#777] leading-[7px]">
            <u>A</u>çılı Birleş
          </span>
        </label>
      </div>
      <div className="mt-1 flex shrink-0 justify-end gap-1">
        <button className="h-3 w-10 rounded-[2px] border border-[#2f8fd8] bg-[#fdfdfd]">TAMAM</button>
        <button className="h-3 w-10 rounded-[2px] border border-[#d0d0d0] bg-[#fdfdfd]">İptal</button>
        <button className="h-3 w-[69px] rounded-[2px] border border-[#d0d0d0] bg-[#fdfdfd]">
          <u>V</u>arsayılanı Kaydet
        </button>
        <button className="h-3 w-10 rounded-[2px] border border-[#d0d0d0] bg-[#fdfdfd]">Yardım</button>
      </div>
    </div>
  );
}

function StatusBar() {
  return (
    <footer className="flex h-[11px] shrink-0 items-center justify-end gap-[2px] bg-[#006487] pr-px text-white">
      {["zoomarea", "magnify", "fit", "frame", "orbit", "material", "blocks", "globe"].map((name) => (
        <button key={name} aria-label={name}>
          <Icon name={name} className="size-[10px]" />
        </button>
      ))}
      <span className="flex size-[7px] items-center justify-center rounded-full bg-white text-[#ef7d22]">
        <Minus className="size-[5px] stroke-4" />
      </span>
      <input
        type="range"
        aria-label="Yakınlaştırma"
        defaultValue={14}
        className="h-px w-[60px] appearance-none bg-white [&::-webkit-slider-thumb]:h-[6px] [&::-webkit-slider-thumb]:w-1 [&::-webkit-slider-thumb]:appearance-none [&::-webkit-slider-thumb]:rounded-b-[2px] [&::-webkit-slider-thumb]:bg-white"
      />
      <span className="flex size-[7px] items-center justify-center rounded-full bg-white text-[6px] leading-none font-bold text-[#ef7d22]">
        +
      </span>
      <span className="ml-[2px] flex h-[6px] w-2 items-center justify-center rounded-[1px] bg-[#f00]">
        <svg className="size-[3px]" viewBox="0 0 3 3" fill="#fff">
          <path d="M0 0l3 1.500L0 3z" />
        </svg>
      </span>
      <span className="ml-[3px] flex size-2 items-center justify-center rounded-full bg-[#ddd]">
        <span className="size-1 rounded-full bg-[#d51f26]" />
      </span>
      <span className="ml-[2px] flex size-2 items-center justify-center rounded-[1px] bg-[#fbeaea]">
        <span className="h-1 w-[2px] bg-[#ee9a9a]" />
      </span>
    </footer>
  );
}

export default function App() {
  return (
    <div className="relative flex h-screen flex-col overflow-hidden bg-white font-['Noto_Sans',sans-serif] text-[6px] leading-[8px] text-[#333]">
      <TitleBar />
      <Ribbon />
      <div className="flex min-h-0 flex-1 border-t border-[#d0d0d0]">
        {/* Left edge dock */}
        <div className="flex w-[15px] shrink-0 flex-col items-center gap-2 bg-[#f5f6f6] pt-[3px] text-[#b4b4b4]">
          <Settings className="size-[11px]" />
          <Network className="size-[11px]" />
          <span className="-mt-[6px] text-[#c4c4c4] [writing-mode:vertical-rl]">Design Configurator</span>
        </div>

        <div className="flex min-w-0 flex-1 flex-col">
          <div className="flex h-[13px] shrink-0 items-center border-b border-[#cfcfcf]">
            <div className="flex h-[11px] w-[18px] items-center bg-[#006487] px-1">
              <span className="h-[6px] w-full bg-[#8fa8b0]" />
            </div>
            <p className="pl-[2px] font-['Roboto',sans-serif] text-[7px] whitespace-pre text-[#222]">
              {"Mesafeyi ayarlamak veya bir değer girmek için tıklayın.  K=açık nokta bulma; ardından M (Orta), E (Uç), C (Merkez), E (Silüet). Yönü kilitlemek/kilidini açmak için L'ye basın."}
            </p>
          </div>
          <div className="flex h-[17px] shrink-0 items-stretch border-b border-[#a5cbdc] pt-[2px]">
            <button className="flex w-[82px] items-center gap-[2px] pl-[10px]">
              <Icon name="doc" className="size-[9px]" />
              Asm4.asm!Üye2
              <X className="mr-[2px] ml-auto size-[6px] stroke-3" />
            </button>
            <button className="flex w-[66px] items-center gap-[2px] bg-[#006487] pl-2 text-white">
              <Icon name="tabdoc" className="size-[9px]" />
              Sac Levha6
              <X className="mr-px ml-auto size-[6px] stroke-3" />
            </button>
            <div className="ml-auto flex items-center gap-1 pr-[3px]">
              <svg className="h-1 w-[3px]" viewBox="0 0 3 4" fill="none" stroke="#888" strokeWidth=".6">
                <path d="M2.700.5v3L.5 2z" />
              </svg>
              <svg className="h-1 w-[3px]" viewBox="0 0 3 4" fill="none" stroke="#888" strokeWidth=".6">
                <path d="M.3.500v3L2.500 2z" />
              </svg>
              <Caret />
              <X className="size-[7px] stroke-3" />
            </div>
          </div>
          <div className="flex min-h-0 flex-1">
            <PathFinder />
            <main className="relative min-w-0 flex-1 overflow-hidden bg-[#fafcfc]">
              <Model />
              <FlangePanel />
              <OptionsDialog />
              <ViewCube />
            </main>
          </div>
        </div>

        {/* Right edge dock */}
        <div className="flex w-3 shrink-0 flex-col items-center gap-2 bg-[#fafafa] pt-[3px] text-[#c4c4c4]">
          <Icon name="blocks" className="size-[11px]" />
          <span className="-mt-[6px] mb-11 text-[#333] [writing-mode:vertical-rl]">Parça Ailesi</span>
          <Wrench className="size-[10px]" />
          <Icon name="palette" className="size-[10px]" />
          <Icon name="rainbow" className="size-[10px]" />
          <Link2 className="size-[10px] -rotate-45" />
          <Layers className="size-[10px] fill-[#ccc] text-[#777]" />
          <Icon name="swatches" className="size-[10px]" />
          <Link2 className="size-[10px] -rotate-45" />
        </div>
      </div>
      <StatusBar />

      {/* Callouts drawn over the window */}
      <svg className="pointer-events-none absolute top-0 left-0 h-[615px] w-[1024px]" viewBox="0 0 1024 615" fill="none" stroke="#fb0d0d" strokeWidth="1.500">
        <path d="M148 116h49v17h-49zM682 224h61v21h-61z" />
        <path d="M121 230l25-90M754 327l-40-72M489 492l-12-76" />
        <path d="M147 134l-5 8 6 2zM711 250l0 9 6-4zM475 409l-2 9 6-1z" fill="#fb0d0d" stroke="none" />
      </svg>
    </div>
  );
}
